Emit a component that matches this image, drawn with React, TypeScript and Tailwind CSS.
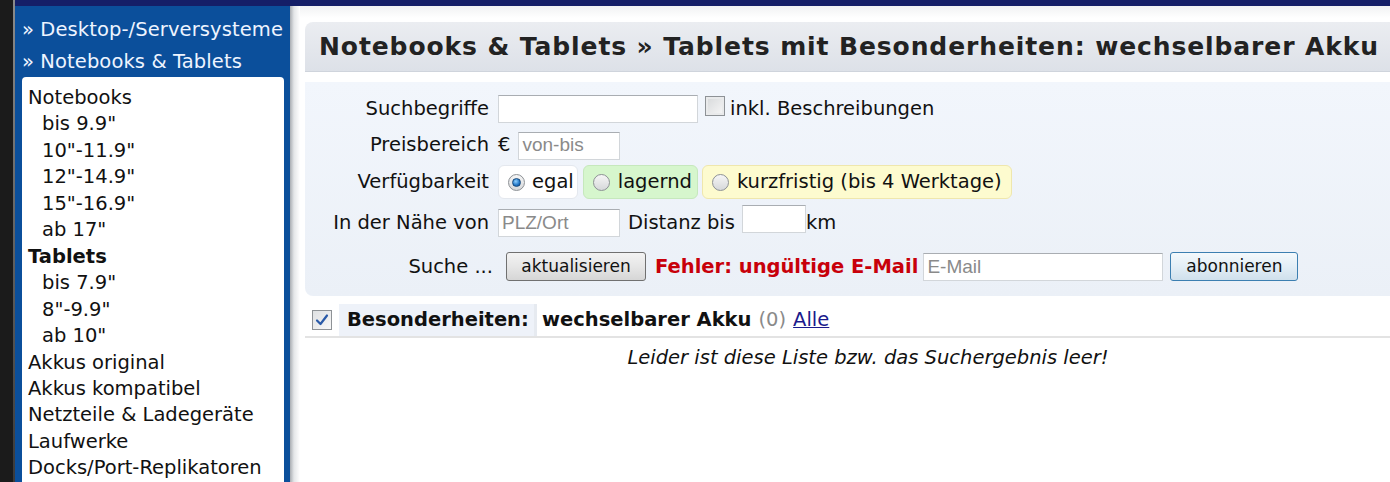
import React from "react";

const font = "font-['DejaVu_Sans',Verdana,sans-serif]";
const arial = "font-['Liberation_Sans',Arial,sans-serif]";

const sideItems: { label: string; sub?: boolean; bold?: boolean }[] = [
  { label: "Notebooks" },
  { label: 'bis 9.9"', sub: true },
  { label: '10"-11.9"', sub: true },
  { label: '12"-14.9"', sub: true },
  { label: '15"-16.9"', sub: true },
  { label: 'ab 17"', sub: true },
  { label: "Tablets", bold: true },
  { label: 'bis 7.9"', sub: true },
  { label: '8"-9.9"', sub: true },
  { label: 'ab 10"', sub: true },
  { label: "Akkus original" },
  { label: "Akkus kompatibel" },
  { label: "Netzteile & Ladegeräte" },
  { label: "Laufwerke" },
  { label: "Docks/Port-Replikatoren" },
];

function Radio({ checked }: { checked?: boolean }) {
  return (
    <span className="relative inline-block h-[17px] w-[17px] shrink-0 rounded-full border border-[#8d9195] bg-[linear-gradient(#f6f6f6,#d6d8da)]">
      {checked && (
        <span className="absolute left-[3px] top-[3px] h-[9px] w-[9px] rounded-full border border-[#164a7e] bg-[radial-gradient(circle_at_40%_35%,#8fd0ff,#1f74c4_60%,#10508f)]" />
      )}
    </span>
  );
}

function Input({ w, placeholder }: { w: string; placeholder?: string }) {
  return (
    <span
      className={`inline-flex h-[28px] ${w} items-center border border-[#d2d6da] border-t-[#a9adb2] bg-white pl-[3px] text-[19px] text-[#8a8a8a] ${arial}`}
    >
      {placeholder}
    </span>
  );
}

function Label({ children }: { children: React.ReactNode }) {
  return <div className="w-[188px] shrink-0 pr-[4px] text-right">{children}</div>;
}

export default function App() {
  return (
    <div className={`flex h-[482px] w-[1390px] overflow-hidden bg-white text-[19.5px] text-[#111] ${font}`}>
      <div className="w-[13px] shrink-0 bg-[#1b1b1b]" />
      <div className="w-[2px] shrink-0 bg-[linear-gradient(#8a8a8a,#3a3a3a)]" />
      <div className="flex min-w-0 flex-1 flex-col">
        <div className="h-[6px] shrink-0 bg-[#151f68]" />
        <div className="flex min-h-0 flex-1">
          {/* sidebar */}
          <div className="flex w-[275px] shrink-0 flex-col bg-[#0b4f9b] pl-[7px] pr-[6px]">
            <div className="whitespace-nowrap pt-[8px] leading-[32px] tracking-[0.1px] text-[#eef4ff]">
              <div>» Desktop-/Serversysteme</div>
              <div>» Notebooks &amp; Tablets</div>
            </div>
            <div className="mt-[-1px] flex-1 rounded-t-[4px] bg-white pt-[8px] leading-[26.45px]">
              {sideItems.map((it) => (
                <div
                  key={it.label}
                  className={`${it.sub ? "pl-[20px]" : "pl-[6px]"} ${it.bold ? "font-bold" : ""} whitespace-nowrap`}
                >
                  {it.label}
                </div>
              ))}
            </div>
          </div>
          <div className="w-[10px] shrink-0 bg-[linear-gradient(90deg,#a9adb2,#e4e6e8_40%,#ffffff)]" />

          {/* main */}
          <div className="min-w-0 flex-1 overflow-hidden bg-[linear-gradient(#f1f2f3,#ffffff_12px)] pl-[5px] pt-[16px]">
            <div className="w-[1126px]">
              <div className="flex h-[50px] items-center rounded-tl-[8px] border-b border-[#cfd4dc] bg-[linear-gradient(#ebedf1,#dde1e8)] pl-[14px] text-[25px] font-bold tracking-[0.9px] whitespace-nowrap text-[#222]">
                Notebooks &amp; Tablets » Tablets mit Besonderheiten: wechselbarer Akku
              </div>

              <div className="mt-[10px] flex flex-col rounded-bl-[8px] bg-[linear-gradient(#f2f6fc,#ebf0f7)] pb-[15px] pt-[13px]">
                <div className="flex h-[28px] items-center">
                  <Label>Suchbegriffe</Label>
                  <div className="ml-[5px] flex items-center">
                    <Input w="w-[200px]" />
                    <span className="ml-[7px] mt-[-6px] h-[20px] w-[20px] border border-[#8e9296] bg-[linear-gradient(135deg,#d6d8da,#f7f7f7)] shadow-[inset_0_0_0_2px_#e9eaeb]" />
                    <span className="ml-[5px]">inkl. Beschreibungen</span>
                  </div>
                </div>

                <div className="mt-[8px] flex h-[28px] items-center">
                  <Label>Preisbereich</Label>
                  <div className="ml-[5px] flex items-center">
                    <span>€</span>
                    <span className="ml-[8px]">
                      <Input w="w-[102px]" placeholder="von-bis" />
                    </span>
                  </div>
                </div>

                <div className="mt-[6px] flex h-[34px] items-center">
                  <Label>Verfügbarkeit</Label>
                  <div className="ml-[5px] flex items-center">
                    <span className="flex h-[34px] items-center gap-[7px] rounded-[6px] border border-[#e4e8ee] bg-white pl-[9px] pr-[3px]">
                      <Radio checked />
                      egal
                    </span>
                    <span className="ml-[5px] flex h-[34px] items-center gap-[8px] rounded-[6px] border border-[#c6e8bd] bg-[#d6f6cd] pl-[9px] pr-[5px]">
                      <Radio />
                      lagernd
                    </span>
                    <span className="ml-[4px] flex h-[34px] items-center gap-[8px] rounded-[6px] border border-[#efe7ad] bg-[#fdfbcf] pl-[9px] pr-[9px]">
                      <Radio />
                      kurzfristig (bis 4 Werktage)
                    </span>
                  </div>
                </div>

                <div className="mt-[10px] flex h-[28px] items-center">
                  <Label>In der Nähe von</Label>
                  <div className="ml-[5px] flex items-center">
                    <Input w="w-[122px]" placeholder="PLZ/Ort" />
                    <span className="ml-[8px]">Distanz bis</span>
                    <span className="ml-[7px]">
                      <Input w="w-[64px]" />
                    </span>
                    <span>km</span>
                  </div>
                </div>

                <div className="mt-[15px] flex h-[29px] items-center">
                  <Label>
                    <span className="mr-[-4px]">Suche ...</span>
                  </Label>
                  <div className="ml-[13px] flex items-center">
                    <button className="flex h-[29px] w-[140px] items-center justify-center rounded-[3px] border border-[#707070] bg-[linear-gradient(#f3f3f3,#e6e6e6_50%,#d6d6d6)] text-[17px] text-[#111]">
                      aktualisieren
                    </button>
                    <span className="ml-[9px] font-bold text-[#c8000a]">Fehler: ungültige E-Mail</span>
                    <span className="ml-[5px]">
                      <Input w="w-[240px]" placeholder="E-Mail" />
                    </span>
                    <button className="ml-[7px] flex h-[29px] w-[128px] items-center justify-center rounded-[3px] border border-[#3c7fb1] bg-[linear-gradient(#f4f9fc,#e3eef6_50%,#cfe0ec)] text-[17px] text-[#111]">
                      abonnieren
                    </button>
                  </div>
                </div>
              </div>

              <div className="mt-[8px] flex h-[34px] items-stretch border-b-2 border-[#e3e3e3]">
                <div className="flex w-[34px] items-center justify-center">
                  <span className="relative flex h-[20px] w-[20px] items-center justify-center border border-[#8e9296] bg-[linear-gradient(135deg,#dfe1e3,#f7f7f7)]">
                    <svg width="14" height="14" viewBox="0 0 14 14">
                      <path d="M2 7.5 L5.5 11 L12 2.5" fill="none" stroke="#2a5aa8" strokeWidth="2.2" strokeLinecap="round" strokeLinejoin="round" />
                    </svg>
                  </span>
                </div>
                <div className="flex w-[195px] items-center bg-[#eef2f9] pl-[8px] font-bold">Besonderheiten:</div>
                <div className="w-[3px] bg-[#e6eaf0]" />
                <div className="flex items-center pl-[5px]">
                  <span className="font-bold">wechselbarer Akku</span>
                  <span className="ml-[7px] text-[#8a8a8a]">(0)</span>
                  <span className="ml-[7px] text-[#1a1a8c] underline">Alle</span>
                </div>
              </div>

              <div className="pt-[7px] text-center italic leading-[26px]">
                Leider ist diese Liste bzw. das Suchergebnis leer!
              </div>
            </div>
          </div>
        </div>
      </div>
    </div>
  );
}
